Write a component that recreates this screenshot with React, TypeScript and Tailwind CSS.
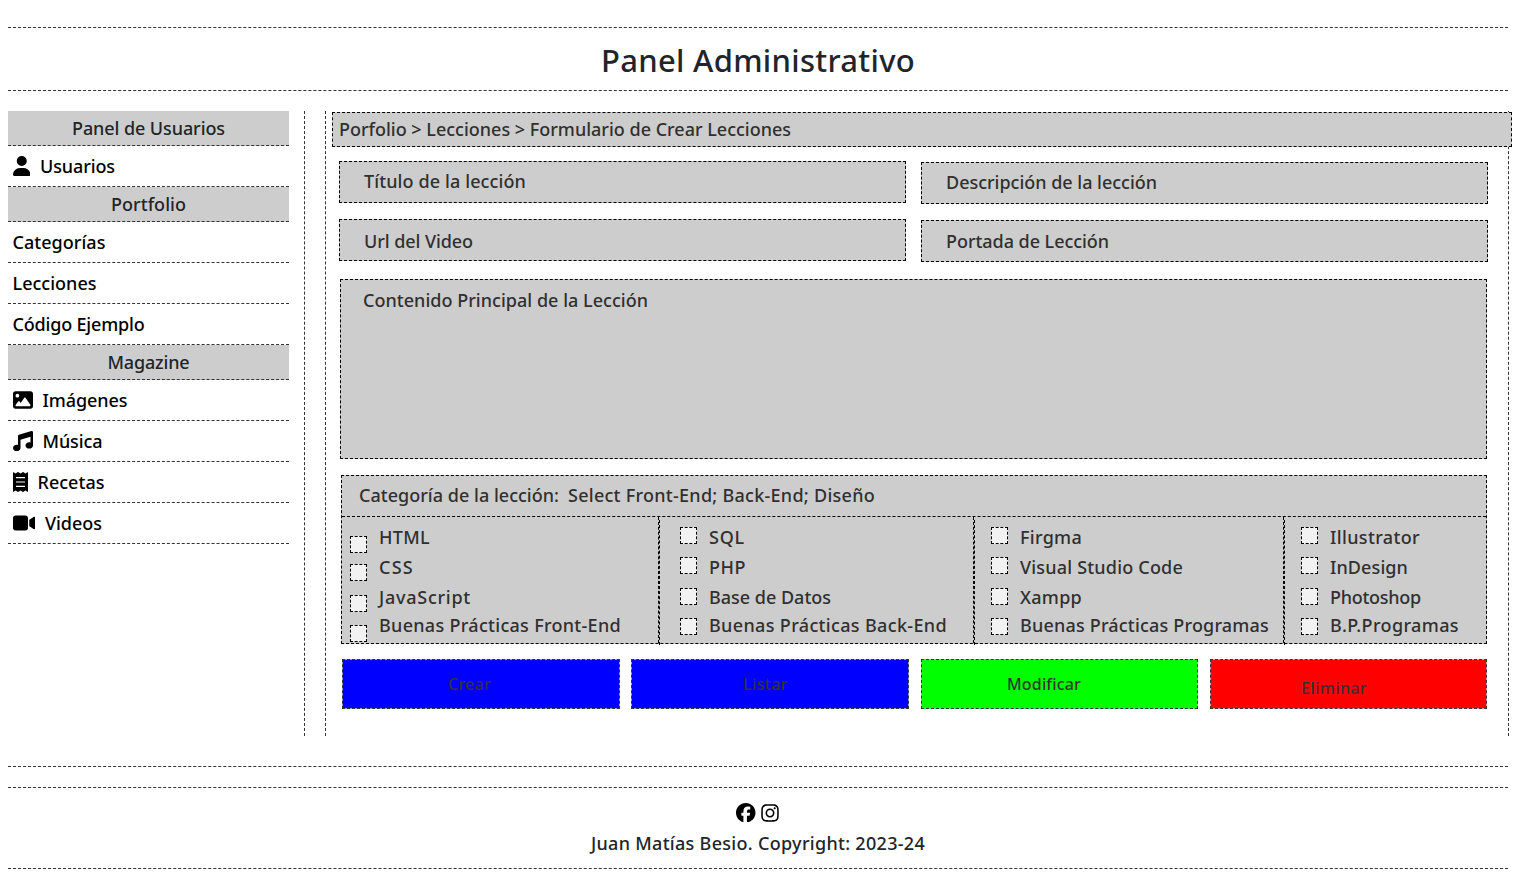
import { useLayoutEffect, useRef, useState } from 'react';
import type { ReactNode } from 'react';
import { FaUser, FaImage, FaMusic, FaVideo, FaFacebook, FaInstagram } from 'react-icons/fa6';

/** Single line of text whose tracking is adjusted to fill the given width. */
function Fit({ text, w, className = '' }: { text: string; w: number; className?: string }) {
  const ref = useRef<HTMLSpanElement>(null);
  const [spacing, setSpacing] = useState(0);
  useLayoutEffect(() => {
    if (ref.current) {
      const natural = ref.current.getBoundingClientRect().width - spacing * text.length;
      setSpacing((w - natural) / text.length);
    }
  }, [text, w]);
  return (
    <span ref={ref} className={`inline-block shrink-0 whitespace-pre ${className}`} style={{ letterSpacing: spacing }}>
      {text}
    </span>
  );
}

function ReceiptIcon() {
  return (
    <svg viewBox="0 0 15 20" className="h-5 w-[15px]" fill="currentColor">
      <path
        fillRule="evenodd"
        d="M0 .4 Q.4 -.1 1 .4 L2.6 1.6 L4.5 .2 Q5 -.1 5.5 .2 L7.5 1.6 L9.5 .2 Q10 -.1 10.5 .2 L12.4 1.6 L14 .4 Q14.6 -.1 15 .4 V19.6 Q14.6 20.1 14 19.6 L12.4 18.4 L10.5 19.8 Q10 20.1 9.5 19.8 L7.5 18.4 L5.5 19.8 Q5 20.1 4.5 19.8 L2.6 18.4 L1 19.6 Q.4 20.1 0 19.6 Z M3 5 V6.2 H12 V5 Z M3 9.4 V10.6 H12 V9.4 Z M3 13.8 V15 H12 V13.8 Z"
      />
    </svg>
  );
}

function NavHeading({ text, w }: { text: string; w: number }) {
  return (
    <h2 className="flex h-[35px] items-center justify-center border-b border-dashed border-[#333] bg-[#cdcdcd] text-[#212529]">
      <Fit text={text} w={w} />
    </h2>
  );
}

function NavItem({ text, w, icon }: { text: string; w: number; icon?: ReactNode }) {
  return (
    <a className="flex h-[41px] items-center gap-[10px] border-b border-dashed border-[#333] pl-[4.5px] text-black">
      {icon}
      <Fit text={text} w={w} />
    </a>
  );
}

function Field({ text, w, className = '' }: { text: string; w: number; className?: string }) {
  return (
    <div className={`flex h-[42px] w-[567px] items-center border border-dashed border-black bg-[#cdcdcd] pl-6 ${className}`}>
      <Fit text={text} w={w} />
    </div>
  );
}

type Option = [string, number];

function Options({ items, className, first = false }: { items: Option[]; className: string; first?: boolean }) {
  const boxMargins = first
    ? ['mt-[19px]', 'mt-[11px]', 'mt-[14px]', 'mt-[13px]']
    : ['mt-[10px]', 'mt-[13px]', 'mt-[14px]', 'mt-[13px]'];
  const rowHeights = ['h-[30px]', 'h-[30px]', 'h-[29px]', 'h-[28px]'];
  return (
    <div className={`flex gap-3 ${className}`}>
      <div className="flex flex-col">
        {items.map(([name], i) => (
          <span key={name} className={`size-[17px] shrink-0 border border-dashed border-black bg-[#f2f2f2] ${boxMargins[i]}`} />
        ))}
      </div>
      <div className="flex flex-col pt-[5px]">
        {items.map(([name, w], i) => (
          <div key={name} className={`flex items-center ${rowHeights[i]}`}>
            <Fit text={name} w={w} />
          </div>
        ))}
      </div>
    </div>
  );
}

/** Two dashed hairlines, the second one shifted by half a dash period. */
function Divider() {
  return (
    <div className="flex w-0.5 shrink-0">
      <span className="h-[126px] w-px border-l border-dashed border-black" />
      <span className="mt-[3px] h-[125px] w-px border-l border-dashed border-black" />
    </div>
  );
}

function Action({ text, w, gap, className }: { text: string; w: number; gap: string; className: string }) {
  return (
    <div className={gap}>
      <button className={`flex h-[50px] items-center border border-dashed border-[#333] bg-clip-padding text-base text-[#333] ${className}`}>
        <Fit text={text} w={w} />
      </button>
    </div>
  );
}

export default function App() {
  return (
    <div className="h-[888px] w-[1531px] overflow-hidden bg-white pt-[27px] pl-2 font-['Noto_Sans',sans-serif] text-[18px] leading-6 font-medium text-[#303030]">
      <header className="flex h-16 w-[1500px] items-center justify-center border-y border-dashed border-[#333]">
        <h1 className="pt-px text-[31px] leading-10 text-[#212529]">
          <Fit text="Panel Administrativo" w={314} />
        </h1>
      </header>

      <main className="mt-5 flex h-[656px] w-[1500px] border-b border-dashed border-[#333]">
        <aside className="h-[625px] w-[297px] shrink-0 border-r border-dashed border-[#333] pr-[15px]">
          <NavHeading text="Panel de Usuarios" w={153} />
          <NavItem text="Usuarios" w={75} icon={<FaUser className="h-5 w-[17.5px]" />} />
          <NavHeading text="Portfolio" w={75} />
          <NavItem text="Categorías" w={93} />
          <NavItem text="Lecciones" w={84} />
          <NavItem text="Código Ejemplo" w={132} />
          <NavHeading text="Magazine" w={82} />
          <NavItem text="Imágenes" w={85} icon={<FaImage className="size-5" />} />
          <NavItem text="Música" w={60} icon={<FaMusic className="size-5" />} />
          <NavItem text="Recetas" w={67} icon={<ReceiptIcon />} />
          <NavItem text="Videos" w={57} icon={<FaVideo className="h-5 w-[22.5px]" />} />
        </aside>

        <section className="ml-5 h-[625px] w-[1184px] shrink-0 border-x border-dashed border-[#333] pt-px pl-[6px]">
          <div className="relative flex h-[35px] w-[1180px] items-center border border-dashed border-black bg-[#cdcdcd] pb-[2px] pl-[6px]">
            <Fit text="Porfolio > Lecciones > Formulario de Crear Lecciones" w={452} />
          </div>

          <div className="mt-[14px] ml-[7px] flex gap-[15px]">
            <div className="flex flex-col gap-4">
              <Field text="Título de la lección" w={162} className="pb-[2px]" />
              <Field text="Url del Video" w={109} className="pt-[2px]" />
            </div>
            <div className="mt-px flex flex-col gap-4">
              <Field text="Descripción de la lección" w={211} className="pb-[3px]" />
              <Field text="Portada de Lección" w={163} />
            </div>
          </div>

          <div className="mt-[17px] ml-2 h-[180px] w-[1147px] border border-dashed border-black bg-[#cdcdcd] pt-[8px] pl-[22px]">
            <Fit text="Contenido Principal de la Lección" w={285} />
          </div>

          <div className="mt-4 ml-[9px] h-[169px] w-[1146px] border border-dashed border-black bg-[#cdcdcd]">
            <div className="flex h-[41px] items-center gap-[9px] border-b border-dashed border-black pb-[2px] pl-[17px]">
              <Fit text="Categoría de la lección:" w={200} />
              <Fit text="Select Front-End; Back-End; Diseño" w={307} />
            </div>
            <div className="flex h-[126px]">
              <Options
                first
                className="w-[316px] pl-2"
                items={[['HTML', 51], ['CSS', 35], ['JavaScript', 92], ['Buenas Prácticas Front-End', 242]]}
              />
              <Divider />
              <Options
                className="w-[313px] pl-5"
                items={[['SQL', 36], ['PHP', 37], ['Base de Datos', 122], ['Buenas Prácticas Back-End', 238]]}
              />
              <Divider />
              <Options
                className="w-[308px] pl-4"
                items={[['Firgma', 62], ['Visual Studio Code', 163], ['Xampp', 62], ['Buenas Prácticas Programas', 249]]}
              />
              <Divider />
              <Options
                className="pl-4"
                items={[['Illustrator', 90], ['InDesign', 78], ['Photoshop', 91], ['B.P.Programas', 129]]}
              />
            </div>
          </div>

          <div className="mt-[15px] ml-[10px] flex">
            <Action text="Crear" w={43} gap="bg-[#9a9aff]" className="w-[278px] bg-[#0000ff] pl-[105px]" />
            <Action text="Listar" w={45} gap="ml-[11px] bg-[#9a9aff]" className="w-[278px] bg-[#0000ff] pl-[111px]" />
            <Action text="Modificar" w={74} gap="ml-3 bg-[#40ff80]" className="w-[277px] bg-[#00ff00] pl-[85px]" />
            <Action text="Eliminar" w={66} gap="ml-3 bg-[#ff9a9a]" className="w-[277px] bg-[#ff0000] pt-[7px] pl-[90px]" />
          </div>
        </section>
      </main>

      <footer className="mt-5 flex h-[82px] w-[1500px] flex-col items-center border-y border-dashed border-[#333] pt-[15px] text-[#212529]">
        <div className="flex h-5 items-center gap-1 text-black">
          <FaFacebook className="mb-px size-[19.5px]" />
          <FaInstagram className="mb-px size-5" />
        </div>
        <Fit text="Juan Matías Besio. Copyright: 2023-24" w={334} className="mt-[8px]" />
      </footer>
    </div>
  );
}
